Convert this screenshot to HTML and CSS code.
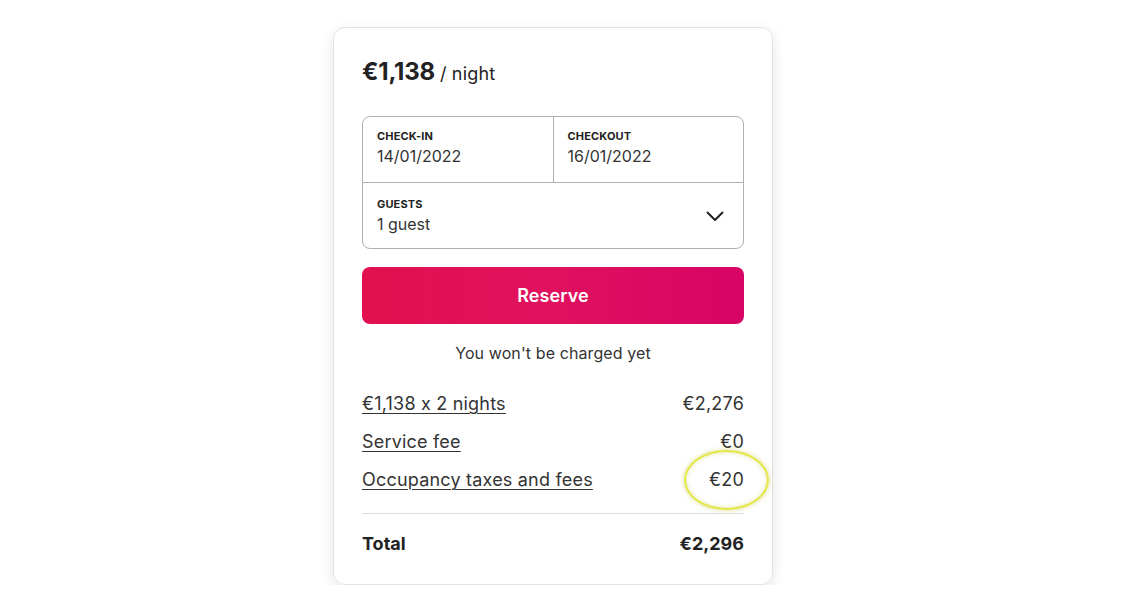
FILE: index.html
```html
<!DOCTYPE html>
<html>
<head>
<meta charset="utf-8">
<link rel="stylesheet" href="styles.css">
</head>
<body>
<div class="page">
  <div class="card">
    <div class="price"><span class="amount">€1,138</span> <span class="per">/ night</span></div>
    <div class="picker">
      <div class="dates">
        <div class="field">
          <div class="label">CHECK-IN</div>
          <div class="value">14/01/2022</div>
        </div>
        <div class="field field-right">
          <div class="label">CHECKOUT</div>
          <div class="value">16/01/2022</div>
        </div>
      </div>
      <div class="guests">
        <div class="field">
          <div class="label">GUESTS</div>
          <div class="value">1 guest</div>
        </div>
        <svg class="chevron" width="20" height="20" viewBox="0 0 20 20"><path d="M2.5 6.5 L10 14 L17.5 6.5" fill="none" stroke="#222" stroke-width="2" stroke-linecap="round" stroke-linejoin="round"/></svg>
      </div>
    </div>
    <button class="reserve">Reserve</button>
    <div class="note">You won't be charged yet</div>
    <div class="rows">
      <div class="row"><span class="link">€1,138 x 2 nights</span><span>€2,276</span></div>
      <div class="row"><span class="link">Service fee</span><span>€0</span></div>
      <div class="row"><span class="link">Occupancy taxes and fees</span><span class="circled">€20<span class="ring"></span></span></div>
    </div>
    <div class="total"><span>Total</span><span>€2,296</span></div>
  </div>
</div>
</body>
</html>
```
FILE: styles.css
```css
* { box-sizing: border-box; }
html, body { margin: 0; padding: 0; background: #fff; }
body { font-family: "Inter", "Noto Sans", sans-serif; color: #222; font-feature-settings: "calt" 0; }
.page { display: flex; justify-content: center; padding-top: 27px; padding-right: 25px; }
.card {
  width: 440px;
  border: 1px solid #e2e2e2;
  border-radius: 12px;
  box-shadow: 0 4px 14px rgba(0,0,0,0.10);
  padding: 29px 28px 29px 28px;
}
.price { display: flex; align-items: baseline; gap: 5px; height: 34px; }
.amount { font-size: 24px; font-weight: 700; letter-spacing: -0.2px; }
.per { font-size: 18px; font-weight: 400; color: #222; letter-spacing: 0.2px; }
.picker {
  margin-top: 25px;
  border: 1px solid #b0b0b0;
  border-radius: 8px;
  overflow: hidden;
}
.dates { display: flex; border-bottom: 1px solid #b0b0b0; height: 66px; }
.dates .field { flex: 1; }
.field { padding: 12px 14px 0 14px; }
.field-right { border-left: 1px solid #b0b0b0; }
.label { font-size: 11px; font-weight: 700; letter-spacing: 0.15px; line-height: 14px; }
.value { font-size: 16px; line-height: 22px; margin-top: 2px; color: #333; }
.guests { display: flex; align-items: center; justify-content: space-between; height: 65px; padding-right: 18px; }
.guests .field { padding-top: 11px; padding-bottom: 11px; }
.chevron { display: block; }
.reserve {
  display: block;
  width: 100%;
  margin-top: 18px;
  height: 57px;
  border: none;
  border-radius: 8px;
  background: linear-gradient(90deg, #e3104f 0%, #e0115e 50%, #d70466 100%);
  color: #fff;
  font-family: inherit;
  font-size: 18px;
  font-weight: 600;
  letter-spacing: 0.1px;
}
.note { text-align: center; font-size: 16px; margin-top: 19px; line-height: 20px; color: #333; letter-spacing: 0.1px; }
.rows { margin-top: 30px; padding-bottom: 22px; border-bottom: 1px solid #dddddd; display: flex; flex-direction: column; gap: 16px; color: #333; }
.row { display: flex; justify-content: space-between; font-size: 18px; line-height: 22px; letter-spacing: 0.2px; }
.link { text-decoration: underline; text-underline-offset: 3px; text-decoration-thickness: 1px; }
.circled { position: relative; }
.ring {
  position: absolute;
  left: -25px;
  top: -19px;
  width: 85px;
  height: 60px;
  border: 2.5px solid #e4e645;
  border-radius: 50%;
  box-shadow: 0 0 5px rgba(190,190,60,0.55), inset 0 0 5px rgba(190,190,60,0.4);
}
.total { display: flex; justify-content: space-between; font-size: 18px; font-weight: 700; margin-top: 19px; line-height: 22px; }
```
